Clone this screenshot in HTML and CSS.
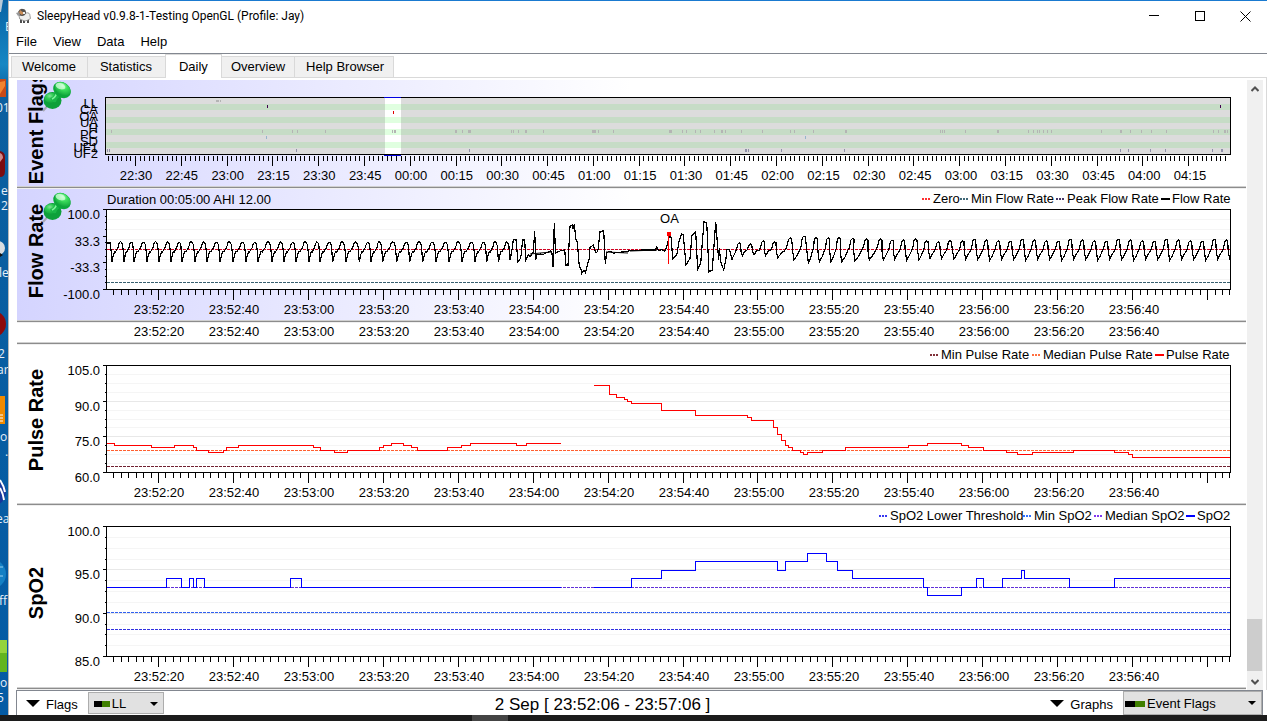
FILE: index.html
```html
<!DOCTYPE html>
<html lang="en">
<head>
<meta charset="utf-8">
<title>SleepyHead v0.9.8-1-Testing OpenGL (Profile: Jay)</title>
<link rel="stylesheet" href="styles.css">
</head>
<body>
<div class="screen">
  <svg class="wallpaper" width="8" viewBox="0 0 8 715" preserveAspectRatio="xMinYMin slice" aria-hidden="true">
    <defs>
      <linearGradient id="wall" x1="0" y1="0" x2="0" y2="1">
        <stop offset="0" stop-color="#0862a4"/><stop offset=".09" stop-color="#1687c4"/><stop offset=".13" stop-color="#0b5f9f"/><stop offset="1" stop-color="#045ba5"/>
      </linearGradient>
    </defs>
    <rect width="8" height="715" fill="url(#wall)"/>
    <path d="M0 0h3l-2 12H0z" fill="#b8c9d8"/>
    <path d="M0 79h6v18H0z" fill="#c84a16"/><path d="M0 82l5-1v5l-5 8z" fill="#f08430"/>
    <path d="M0 151q5 1 5 6v14q0 6-5 6z" fill="#7c0c10"/><path d="M0 153q3 1 3 5l-3 4z" fill="#cf8a8a"/>
    <circle cx="-2" cy="248" r="7" fill="#d9dde0"/><path d="M0 253l3 2-3 2z" fill="#111"/>
    <circle cx="-7" cy="324" r="13" fill="#8c0a0c"/>
    <path d="M0 396h5v28H0z" fill="#f08a00"/><path d="M0 415h3m-3 3h3m-3 3h3" stroke="#fff"/>
    <circle cx="-8" cy="492" r="14" fill="#17379b"/><path d="M0 480q4 6 5 12M0 488q3 5 4 12" stroke="#fff" stroke-width="2" fill="none"/>
    <circle cx="-9" cy="574" r="15" fill="#1580c4"/><path d="M0 567h3m-3 9h3" stroke="#9cd2f2"/>
    <path d="M0 640h7v32H0z" fill="#62b51f"/><path d="M0 640h7v13H0z" fill="#94d43c"/>
    <g class="wallpaper-text">
      <text x="5" y="31">E</text><text x="-4" y="112">01</text><text x="1" y="195">e</text><text x="1" y="210">2</text>
      <text x="-1" y="277">le</text><text x="-2" y="358">2</text><text x="-3" y="374">ar</text><text x="0" y="441">o</text><text x="5" y="456">.</text>
      <text x="-4" y="523">ea</text><text x="-1" y="605">ff</text><text x="0" y="687">o</text><text x="-3" y="702">5</text>
    </g>
  </svg>

  <div class="window">
    <header class="titlebar">
      <svg class="app-icon" width="16" height="16" viewBox="0 0 16 16" aria-hidden="true">
        <path d="M5 11v4M8 12v3M12 11v4" stroke="#222" stroke-width="1.6"/>
        <path d="M3 8q0-3 3-3 2-2 4 0 4-1 4 3 2 3-2 4-3 2-6 0-3 0-3-4z" fill="#eee" stroke="#888" stroke-width=".8"/>
        <path d="M2 4q2-4 5-3 3 0 3 4-1 3-4 3-3 0-4-2z" fill="#55514e"/>
        <path d="M4 2l4 3-2 2-3-2z" fill="#c98b55"/><path d="M0 5l3-1 1 3-2 1z" fill="#999"/><path d="M7 4h2v2H7z" fill="#eee"/>
      </svg>
      <span class="title">SleepyHead v0.9.8-1-Testing OpenGL (Profile: Jay)</span>
      <button class="win-btn" aria-label="Minimize"><svg width="11" height="11" viewBox="0 0 11 11"><path d="M0 4.500h10"/></svg></button>
      <button class="win-btn" aria-label="Maximize"><svg width="11" height="11" viewBox="0 0 11 11"><path d="M.5.5h9v9h-9z"/></svg></button>
      <button class="win-btn win-btn-close" aria-label="Close"><svg class="smooth" width="11" height="11" viewBox="0 0 11 11"><path d="M.5.5l10 10M10.500.5l-10 10"/></svg></button>
    </header>

    <nav class="menubar">
      <button class="menu">File</button><button class="menu">View</button><button class="menu">Data</button><button class="menu">Help</button>
    </nav>

    <div class="tabs" role="tablist">
      <button class="tab" role="tab">Welcome</button>
      <button class="tab tab-wide" role="tab">Statistics</button>
      <button class="tab tab-active" role="tab" aria-selected="true">Daily</button>
      <button class="tab" role="tab">Overview</button>
      <button class="tab tab-last" role="tab">Help Browser</button>
    </div>

    <main class="page">
      <div class="graphs">
        <section class="graph pinned"><svg id="flags" viewBox="17 80 1229 106"></svg></section>
        <section class="graph pinned"><svg id="flow" viewBox="17 189 1229 131"></svg></section>
        <section class="graph"><svg id="strip" viewBox="17 323 1229 19"></svg></section>
        <section class="graph"><svg id="pulse" viewBox="17 345 1229 158"></svg></section>
        <section class="graph"><svg id="spo2" viewBox="17 506 1229 181"></svg></section>
      </div>
      <div class="scrollbar">
        <button class="scroll-btn" aria-label="Scroll up"><svg width="8" height="6" viewBox="0 0 8 6"><path d="M.5 5L4 1.500 7.500 5"/></svg></button>
        <div class="scroll-track"><div class="scroll-thumb"></div></div>
        <button class="scroll-btn" aria-label="Scroll down"><svg width="8" height="6" viewBox="0 0 8 6"><path d="M.5 1L4 4.500 7.500 1"/></svg></button>
      </div>
    </main>

    <footer class="toolbar">
      <div class="tool-group">
        <span class="triangle"></span>
        <label for="flag-select">Flags</label>
        <span class="combo combo-flags"><select id="flag-select"><option>LL</option></select></span>
      </div>
      <output class="range">2 Sep [ 23:52:06 - 23:57:06 ]</output>
      <div class="tool-group">
        <span class="triangle"></span>
        <label for="graph-select">Graphs</label>
        <span class="combo combo-graphs"><select id="graph-select"><option>Event Flags</option></select></span>
      </div>
    </footer>
  </div>
</div>
<div class="taskbar"><span class="taskbar-item"></span></div>
<script src="charts.js"></script>
</body>
</html>
```
FILE: styles.css
```css
* { box-sizing: border-box; }

body {
  margin: 0;
  height: 100vh;
  display: flex;
  flex-direction: column;
  overflow: hidden;
  background: #fff;
  color: #000;
  font: 13px/16px "Liberation Sans", Arial, sans-serif;
}

button, select { font: inherit; color: inherit; border: 0; background: none; padding: 0; margin: 0; border-radius: 0; }

.screen { flex: 1; min-height: 0; display: flex; }
.wallpaper { flex: none; width: 8px; height: 100%; }
.wallpaper-text { fill: #e8f0f8; font: 12px "Open Sans", sans-serif; }

.window {
  flex: 1;
  min-width: 0;
  display: flex;
  flex-direction: column;
  background: #fff;
  border-top: 1px solid #1a7ad0;
  border-left: 1px solid #b8b8b8;
}

.titlebar { display: flex; align-items: center; height: 30px; padding-left: 7px; }
.app-icon { flex: none; }
.title { flex: 1; padding-left: 5px; font: 12px/16px Roboto, "Open Sans", sans-serif; white-space: nowrap; }
.win-btn { width: 46px; height: 29px; display: flex; align-items: center; justify-content: center; }
.win-btn-close { width: 44px; }
.win-btn svg { fill: none; stroke: #000; shape-rendering: crispEdges; }
.win-btn .smooth { shape-rendering: auto; }

.menubar { display: flex; gap: 16px; height: 23px; padding-left: 7px; border-bottom: 1px solid #828790; }

.tabs { display: flex; align-items: flex-end; height: 24px; padding-left: 2px; box-shadow: inset 0 -1px #d9d9d9; }
.tab {
  height: 22px;
  padding: 0 9px;
  background: #f0f0f0;
  border: 1px solid #d9d9d9;
  border-right: 0;
}
.tab:first-child { padding: 0 11px 0 10px; }
.tab-wide { padding: 0 13px 0 12px; }
.tab-last { border-right: 1px solid #d9d9d9; padding: 0 9px 0 11px; }
.tab-active { height: 24px; padding: 0 13px; background: #fff; border-bottom: 0; border-right: 1px solid #d9d9d9; }
.tab-active + .tab { border-left: 0; }

.page { flex: 1; min-height: 0; display: flex; padding: 2px 3px 0 8px; border-right: 1px solid #d9d9d9; }
.graphs { flex: 1; min-width: 0; overflow: hidden; }
.graph {
  padding-bottom: 3px;
  background: linear-gradient(#d0d0d0 1px, #8c8c8c 1px, #8c8c8c 2px, #efefef 2px) bottom / 100% 3px no-repeat;
}
.graph svg { display: block; width: 100%; height: auto; }
.pinned svg { background: linear-gradient(to right, #d4d4ff, #fff 50%); }

.scrollbar { width: 16px; margin-left: 1px; display: flex; flex-direction: column; background: #f0f0f0; }
.scroll-btn { height: 17px; display: flex; align-items: center; justify-content: center; }
.scroll-btn svg { fill: none; stroke: #505050; stroke-width: 2; }
.scroll-track { flex: 1; display: flex; flex-direction: column; justify-content: flex-end; padding: 0 1px 2px 0; }
.scroll-thumb { height: 9%; background: #cdcdcd; }

.toolbar {
  display: flex;
  justify-content: space-between;
  align-items: center;
  height: 25px;
  margin: 0 4px 0 7px;
  border: 1px solid #828790;
  border-bottom: 0;
}
.tool-group { display: flex; align-items: center; height: 100%; padding-left: 9px; gap: 6px; }
.triangle { border: 7px solid transparent; border-top-color: #000; border-bottom: 0; }
.tool-group label { padding-top: 4px; margin-right: 4px; }
.range { font-size: 17px; padding-top: 4px; white-space: nowrap; }
.combo { position: relative; border: 1px solid #adadad; background: #e1e1e1; height: 22px; }
.combo::after {
  content: "";
  position: absolute;
  right: 5px;
  top: 9px;
  border: 4px solid transparent;
  border-top-color: #000;
  border-bottom: 0;
  pointer-events: none;
}
.combo select {
  appearance: none;
  width: 100%;
  height: 100%;
  padding: 2px 0 0 23px;
  background: linear-gradient(to right, #000 50%, #408000 50%) 5px 8px / 16px 6px no-repeat;
}
.combo-flags { width: 76px; }
.combo-graphs { width: 139px; height: 24px; }
.combo-graphs select { background-position: 1px 9px; background-size: 20px 6px; }

.taskbar { height: 6px; background: #1c1c1c; padding-left: 472px; display: flex; }
.taskbar-item { width: 36px; background: #444; }

.shape { fill: none; shape-rendering: crispEdges; }
.text { font: 13px "Liberation Sans", Arial, sans-serif; fill: #000; }
.name { font: bold 20px "Liberation Sans", Arial, sans-serif; fill: #000; }
.wave { fill: none; stroke: #000; stroke-width: 1.2; shape-rendering: crispEdges; }
```
FILE: charts.js
```js
const NS = "http://www.w3.org/2000/svg";
const LEFT = 106.5, RIGHT = 1230.5;

function add(parent, tag, attrs, text) {
  const el = document.createElementNS(NS, tag);
  for (const k in attrs) el.setAttribute(k, attrs[k]);
  if (text !== undefined) el.textContent = text;
  parent.appendChild(el);
  return el;
}
const line = (g, d, stroke, extra) => add(g, "path", Object.assign({ class: "shape", d, stroke }, extra));
const rect = (g, x, y, width, height, fill) => add(g, "rect", { class: "shape", x, y, width, height, style: "fill:" + fill });
const label = (g, x, y, t, anchor = "start") => add(g, "text", { class: "text", x, y, "text-anchor": anchor }, t);
const name = (g, y, t) => add(g, "text", { class: "name", "text-anchor": "middle", transform: `translate(43 ${y}) rotate(-90)` }, t);
const dashed = (g, y, stroke) => line(g, `M${LEFT} ${y}H${RIGHT}`, stroke, { "stroke-dasharray": "3 1" });

const clock = s => [s / 3600 | 0, (s / 60 | 0) % 60, s % 60].map(v => String(v).padStart(2, "0")).join(":");

function sessionLabels(g, y) {
  for (let i = 0; i < 14; i++) label(g, 159 + i * 75, y, clock(85940 + i * 20), "middle");
}
function sessionTicks(g, y) {
  for (let i = -6; i <= 149 - 6; i++) {
    const x = 158.5 + i * 7.493;
    if (x < RIGHT) line(g, `M${Math.floor(x) + .5} ${y}v${i % 10 ? 5 : 10}`, "#000");
  }
}
function plot(g, top, bottom, values, minor, grid) {
  rect(g, LEFT, top, RIGHT - LEFT, bottom - top, "#fff");
  const n = values.length - 1, step = (bottom - top) / (n * minor);
  for (let y = grid; y < bottom - top - 1; y += grid) line(g, `M${LEFT} ${Math.floor(top + y) + .5}H${RIGHT}`, "#f5f5f5");
  for (let i = 0; i <= n * minor; i++) {
    const y = Math.floor(top + i * step) + .5, major = i % minor === 0;
    if (major && grid === step) line(g, `M${LEFT} ${y}H${RIGHT}`, "#e8e8e8");
    line(g, `M${LEFT} ${y}h${major ? -4 : -2}`, "#000");
    if (major) label(g, 100, y + 9, values[i / minor], "end");
  }
  line(g, `M${LEFT} ${top}H${RIGHT}V${bottom}H${LEFT}Z`, "#000");
  sessionTicks(g, bottom);
}
function legend(g, y, items) {
  for (const [x, color, text, solid] of items) {
    line(g, `M${x} ${y - 4.5}h9`, color, solid ? { "stroke-width": 2 } : { "stroke-width": 2, "stroke-dasharray": "2 1" });
    label(g, x + 11, y, text);
  }
}
/* Each step is [x where the level ends, level]. */
function steps(g, start, data, color) {
  let d = `M${start} ${data[0][1]}`;
  for (const [x, y] of data) d += `V${y}H${x}`;
  line(g, d, color);
}
function pin(g, y) {
  const p = add(g, "g", { transform: `translate(42 ${y})` });
  const grad = add(p, "radialGradient", { id: "pin" + y, cx: .4, cy: .3, r: .8 });
  [["0", "#b4ffc4"], [".35", "#3ee05e"], ["1", "#079a35"]].forEach(([offset, c]) => add(grad, "stop", { offset, "stop-color": c }));
  const fill = `url(#pin${y})`;
  add(p, "path", { d: "M1 31l7-8", stroke: "#a8a8b4", "stroke-width": 2 });
  add(p, "ellipse", { cx: 10.500, cy: 20.500, rx: 9, ry: 8.500, fill: "#0da03a" });
  add(p, "ellipse", { cx: 9, cy: 18, rx: 6.500, ry: 5, fill, opacity: .7 });
  add(p, "path", { d: "M8 18q5-1 5-8l9 7q-7-1-8 5-4 1-6-4z", fill: "#19b648" });
  add(p, "path", { d: "M10 19q4-2 5-7", stroke: "#7df59a", "stroke-width": 1.5, fill: "none" });
  add(p, "ellipse", { cx: 20, cy: 10, rx: 9.500, ry: 7.500, fill: "#0ba83b", transform: "rotate(38 20 10)" });
  add(p, "ellipse", { cx: 20.500, cy: 8.500, rx: 8.500, ry: 6, fill, transform: "rotate(35 20 9)" });
  add(p, "ellipse", { cx: 18.500, cy: 6, rx: 5, ry: 3, fill: "#d8ffdf", opacity: .75, transform: "rotate(20 18 6)" });
}

/* Event flags */
{
  const g = document.getElementById("flags");
  const edge = [98, 104, 110, 117, 123, 129, 135, 142, 148, 154];
  name(g, 128, "Event Flags");
  for (let i = 0; i < 9; i++) {
    rect(g, 106, edge[i], 1124, edge[i + 1] - edge[i], i % 2 ? "#c6dcc6" : "#dcdcdc");
    rect(g, 385, edge[i], 16, edge[i + 1] - edge[i], i % 2 ? "#e0ffe0" : "#fff");
  }
  ["LL", "CA", "OA", "UA", "H", "PC", "SD", "UF1", "UF2"].forEach((t, i) => label(g, 98, 108 + i * 6.25, t, "end"));
  const mark = (row, color, xs) => xs.forEach(v => {
    const [x, w] = [].concat(v, 1);
    rect(g, x, edge[row] + (row === 0 ? 2 : 1), w, row === 0 ? 2 : 3, color);
  });
  mark(0, "#b4b4b4", [[216, 3], 220]);
  mark(1, "#400050", [267, 1220]);
  mark(2, "#e00000", [393]);
  mark(5, "#b4b4b4", [111, 262, 292, 297, 325, 392, [394, 2], [455, 2], 462, [468, 3], 511, 513, 518, [525, 2], 543,
    [592, 4], 598, 613, [669, 3], 682, 686, 695, 700, 714, [721, 2], 725, 741, 762, 790, 794, 813, 845, 846,
    940, 942, 944, 965, [997, 2], 1028, 1033, 1037, 1039, 1043, 1047, 1051, 1101, [1120, 2], 1130, 1141, 1151, 1166,
    1213, 1218, [1224, 2], 1227]);
  mark(6, "#96b4cc", [266, 805]);
  mark(8, "#9090a8", [107, 109, 296, 469, [745, 2], 748, 781, 844, 1120, 1128, 1150, 1165, 1212, [1221, 2]]);
  line(g, "M105.500 97.500H1230.500V154.500H105.500Z", "#000");
  line(g, "M384 97.500h17M384 155.500h17", "#0000e0");
  for (let i = -6; i <= 238; i++) line(g, `M${Math.floor(135.5 + i * 4.579) + .5} 156v${i % 10 ? 5 : 10}`, "#000");
  for (let i = 0; i < 24; i++) label(g, 136 + i * 45.83, 180, clock((81000 + i * 900) % 86400).slice(0, 5), "middle");
  pin(g, 80);
}

/* Flow rate */
{
  const g = document.getElementById("flow");
  name(g, 251, "Flow Rate");
  label(g, 107, 204, "Duration 00:05:00 AHI 12.00");
  legend(g, 203, [[922, "#ff3030", "Zero"], [960, "#406878", "Min Flow Rate"], [1056, "#483868", "Peak Flow Rate"], [1161, "#000", "Flow Rate", true]]);
  plot(g, 209.5, 289.5, ["100.0", "33.3", "-33.3", "-100.0"], 4, 10);
  dashed(g, 249.5, "#d00020");
  dashed(g, 282.5, "#386070");

  const pts = [[107, 243], [110, 243], [111, 250]];
  const troughs = [112, 124, 134, 147, 159, 171, 182, 195, 207, 220, 233, 246, 258, 272, 284, 296, 309, 320, 332.7, 346, 359.3, 371, 382.7, 396.7, 409.7, 422.7, 436, 449, 462, 475, 486.7, 498.5, 510];
  troughs.slice(0, -1).forEach((t, i) => {
    const p = troughs[i + 1] - t, j = i % 3;
    pts.push([t, 262], [t + .12 * p, 255], [t + .22 * p, 251.5], [t + .3 * p, 252], [t + .42 * p, 249], [t + .5 * p, 248],
      [t + .6 * p, 243 + j * .5], [t + .7 * p, 241.5 + j * .5], [t + .82 * p, 243], [t + .9 * p, 246]);
  });
  const apnea = [0,210,5,185,10,150,18,148,24,215,32,205,38,150,44,150,47,210,55,195,62,200,66,190,70,188,74,122,77,210,80,195,90,192,100,193,110,188,122,183,126,190,129,232,133,98,136,175,138,188,150,183,164,180,168,225,174,225,180,108,186,105,188,118,193,102,198,150,202,155,207,220,209,232,212,234,215,250,222,240,226,248,238,205,240,172,250,165,252,172,256,185,260,188,264,180,270,125,281,122,286,222,290,188,300,183,310,190,320,187,340,186,360,182,400,180,436,180,440,172,446,182,455,178,464,184,470,172,475,150,480,130,484,148,488,207,500,195,508,150,515,132,520,135,528,225,540,205,546,135,557,126,563,238,572,220,582,95,590,98,597,245,607,240,617,95,626,210,628,175,632,215,641,240,648,205,650,180,658,178];
  for (let i = 0; i < apnea.length; i += 2) pts.push([510 + apnea[i] / 3, 190 + apnea[i + 1] / 3]);
  const recovery = [6,208,28,158,37,198,61,162,72,195,100,152,107,197,134,155,143,203,181,143,192,210,222,138,235,218,258,143,268,215,295,143,303,215,327,143,335,215,368,145,375,213,410,147,418,210,452,147,460,210,486,150,494,207,520,150,530,210,557,147,567,210,590,152,600,205,625,155,635,205,660,152,672,207,698,152];
  for (let x = 707, i = 0; x < 1500; x += 36, i++) recovery.push(x, 207 + i % 3 * 2, x + 26, 148 + i % 4 * 2);
  for (let i = 0; i < recovery.length - 2; i += 4) {
    const [x, y, px, py, nx] = recovery.slice(i, i + 5);
    const end = nx || px + 10;
    [[x, y], [x + (px - x) * .3, y - 14], [x + (px - x) * .55, 182], [x + (px - x) * .68, 174], [px - 5, py + 5], [px, py], [px + 4, py + 3], [end - 4, 185]]
      .forEach(([a, b]) => pts.push([730 + a / 3, 190 + b / 3]));
  }
  add(g, "polyline", { class: "wave", points: pts.filter(p => p[0] < 1230).map(p => p.map(v => v.toFixed(1)).join()).join(" ") });
  add(g, "path", { d: "M530 254l21-2M606 252l22 1M630 251l27-1", stroke: "#000" });
  line(g, "M668.500 234V264", "#f00");
  rect(g, 667, 232, 4, 4, "#f00");
  label(g, 669.5, 223, "OA", "middle");
  sessionLabels(g, 314);
  pin(g, 191);
}

sessionLabels(document.getElementById("strip"), 336);

/* Pulse rate */
{
  const g = document.getElementById("pulse");
  name(g, 420, "Pulse Rate");
  legend(g, 359, [[930, "#803038", "Min Pulse Rate"], [1032, "#ff7040", "Median Pulse Rate"], [1155, "#f00", "Pulse Rate", true]]);
  plot(g, 365.5, 472.5, ["105.0", "90.0", "75.0", "60.0"], 4, 107 / 12);
  dashed(g, 450.5, "#ff6030");
  dashed(g, 466.5, "#702030");
  const lv = [443.5, 445.5, 447.5, 450.5, 452.5, 454.5, 457.5];
  steps(g, 107, [[114.5, lv[0]], [151.5, lv[1]], [174.5, lv[2]], [193.5, lv[1]], [196.5, lv[2]], [208.5, lv[3]], [223.5, lv[4]], [226.5, lv[3]],
    [238.5, lv[2]], [313.5, lv[1]], [320.5, lv[2]], [334.5, lv[3]], [347.5, lv[4]], [379.5, lv[3]], [383.5, lv[2]], [391.5, lv[1]], [403.5, lv[0]],
    [411.5, lv[1]], [417.5, lv[2]], [447.5, lv[3]], [461.5, lv[2]], [470.5, lv[1]], [516.5, lv[0]], [526.5, lv[1]], [561, lv[0]]], "#f00");
  steps(g, 594, [[609.5, 385.5], [616.5, 394.5], [624.5, 397.5], [627.5, 399.5], [631.5, 401.5], [661.5, 403.5], [695.5, 410.5], [747.5, 415.5],
    [751.5, 417.5], [773.5, 420.5], [777.5, 427.5], [781.5, 434.5], [785.5, 440.5], [788.5, 445.5], [792.5, 447.5], [800.5, 450.5], [803.5, 452.5],
    [807.5, 454.5], [822.5, 452.5], [845.5, 450.5], [908.5, lv[2]], [927.5, lv[1]], [961.5, lv[0]], [968.5, lv[1]], [983.5, lv[2]], [1006.5, lv[3]],
    [1017.5, lv[4]], [1032.5, lv[5]], [1073.5, lv[4]], [1114.5, lv[3]], [1128.5, lv[4]], [1132.5, lv[5]], [1230, lv[6]]], "#f00");
  sessionLabels(g, 497);
}

/* Oxygen saturation */
{
  const g = document.getElementById("spo2");
  name(g, 593, "SpO2");
  legend(g, 520, [[879, "#3838f0", "SpO2 Lower Threshold"], [1023, "#3070ff", "Min SpO2"], [1094, "#8038f0", "Median SpO2"], [1186, "#00f", "SpO2", true]]);
  plot(g, 526.5, 656.5, ["100.0", "95.0", "90.0", "85.0"], 4, 130 / 12);
  dashed(g, 587.5, "#6030d8");
  dashed(g, 612.5, "#3060f0");
  dashed(g, 629.5, "#3030e0");
  const a = 587.5, b = 578.5, c = 570.5, d = 561.5;
  steps(g, 107, [[166.5, a], [181.5, b], [189.5, a], [193.5, b], [196.5, a], [204.5, b], [290.5, a], [301.5, b], [561, a]], "#00f");
  steps(g, 594, [[631.5, a], [661.5, b], [695.5, c], [777.5, d], [785.5, c], [807.5, d], [826.5, 553.5], [837.5, d], [852.5, c], [923.5, b],
    [927.5, a], [961.5, 595.5], [976.5, a], [983.5, b], [1002.5, a], [1021.5, b], [1024.5, c], [1069.5, b], [1114.5, a], [1230, b]], "#00f");
  sessionLabels(g, 681);
}
```
